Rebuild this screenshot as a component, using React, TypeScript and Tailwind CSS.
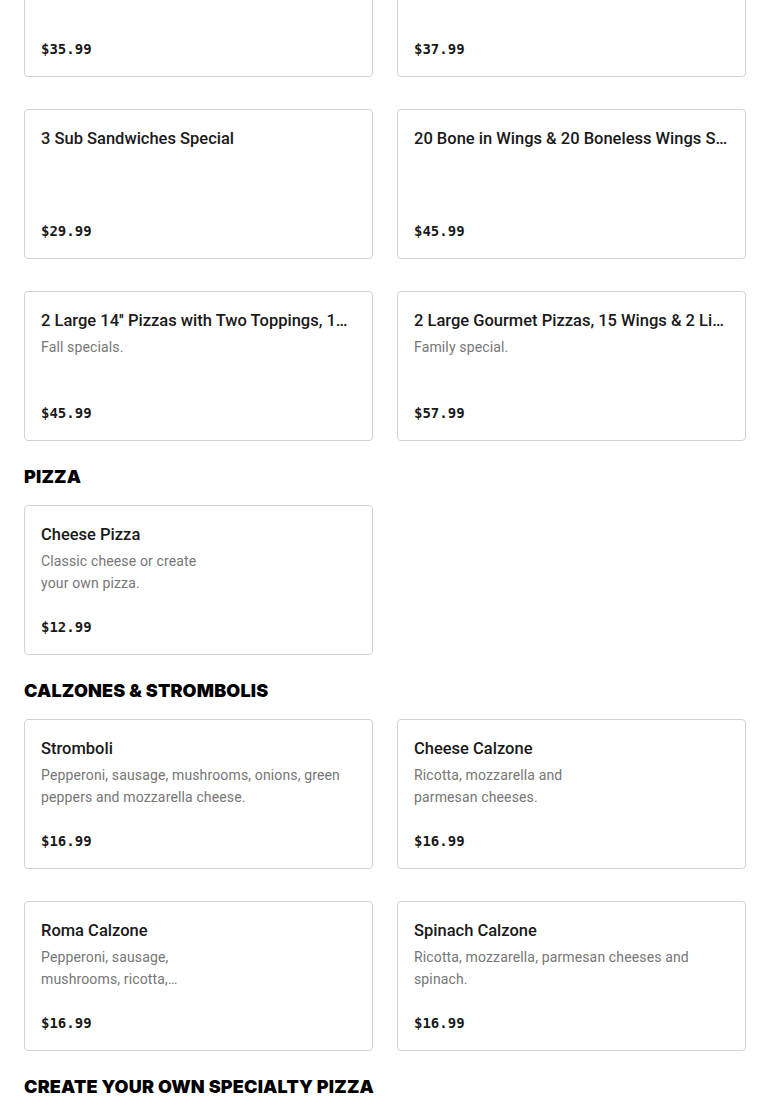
type Item = {
  name: string
  desc?: string
  price: string
  narrow?: boolean
}

type Section = {
  title?: string
  items: Item[]
}

const sections: Section[] = [
  {
    items: [
      { name: '2 Large 1 Topping Pizzas', price: '$35.99' },
      { name: '2 Large Specialty Pizzas', price: '$37.99' },
      { name: '3 Sub Sandwiches Special', price: '$29.99' },
      { name: '20 Bone in Wings & 20 Boneless Wings Special', price: '$45.99' },
      {
        name: "2 Large 14'' Pizzas with Two Toppings, 10 Wings & 2 Liter Soda",
        desc: 'Fall specials.',
        price: '$45.99',
      },
      {
        name: '2 Large Gourmet Pizzas, 15 Wings & 2 Liter Soda',
        desc: 'Family special.',
        price: '$57.99',
      },
    ],
  },
  {
    title: 'Pizza',
    items: [
      {
        name: 'Cheese Pizza',
        desc: 'Classic cheese or create your own pizza.',
        price: '$12.99',
        narrow: true,
      },
    ],
  },
  {
    title: 'Calzones & Strombolis',
    items: [
      {
        name: 'Stromboli',
        desc: 'Pepperoni, sausage, mushrooms, onions, green peppers and mozzarella cheese.',
        price: '$16.99',
      },
      {
        name: 'Cheese Calzone',
        desc: 'Ricotta, mozzarella and parmesan cheeses.',
        price: '$16.99',
        narrow: true,
      },
      {
        name: 'Roma Calzone',
        desc: 'Pepperoni, sausage, mushrooms, ricotta, mozzarella and parmesan cheeses.',
        price: '$16.99',
        narrow: true,
      },
      {
        name: 'Spinach Calzone',
        desc: 'Ricotta, mozzarella, parmesan cheeses and spinach.',
        price: '$16.99',
      },
    ],
  },
  {
    title: 'Create Your Own Specialty Pizza',
    items: [
      { name: 'Create Your Own Pizza', price: '$12.99' },
      { name: 'Create Your Own Calzone', price: '$14.99' },
    ],
  },
]

function MenuCard({ item }: { item: Item }) {
  return (
    <div className="flex h-[150px] flex-col rounded-[4px] border border-[#d3d3d3] bg-white px-4 pt-4 pb-[15px] font-['Roboto',sans-serif]">
      <h3 className="truncate text-[16.5px] leading-[26px] font-medium text-[#191919]">{item.name}</h3>
      {item.desc && (
        <p
          className={
            'mt-[2px] line-clamp-2 text-[14px] leading-[22px] tracking-[0.01em] text-[#767676] ' +
            (item.narrow ? 'max-w-[170px]' : '')
          }
        >
          {item.desc}
        </p>
      )}
      <p className="mt-auto font-['DejaVu_Sans_Mono',monospace] text-[14px] leading-6 font-bold text-[#191919]">
        {item.price}
      </p>
    </div>
  )
}

export default function App() {
  return (
    <div className="h-[1115px] overflow-hidden bg-white font-['Inter',sans-serif]">
      <div className="-mt-[73px] flex flex-col gap-6 px-6">
        {sections.map((section, i) => (
          <section key={i}>
            {section.title && (
              <h2 className="mb-4 text-[18px] leading-6 font-black tracking-[0.01em] text-black uppercase">
                {section.title}
              </h2>
            )}
            <div className="grid grid-cols-2 gap-x-6 gap-y-8">
              {section.items.map((item) => (
                <MenuCard key={item.name} item={item} />
              ))}
            </div>
          </section>
        ))}
      </div>
    </div>
  )
}
